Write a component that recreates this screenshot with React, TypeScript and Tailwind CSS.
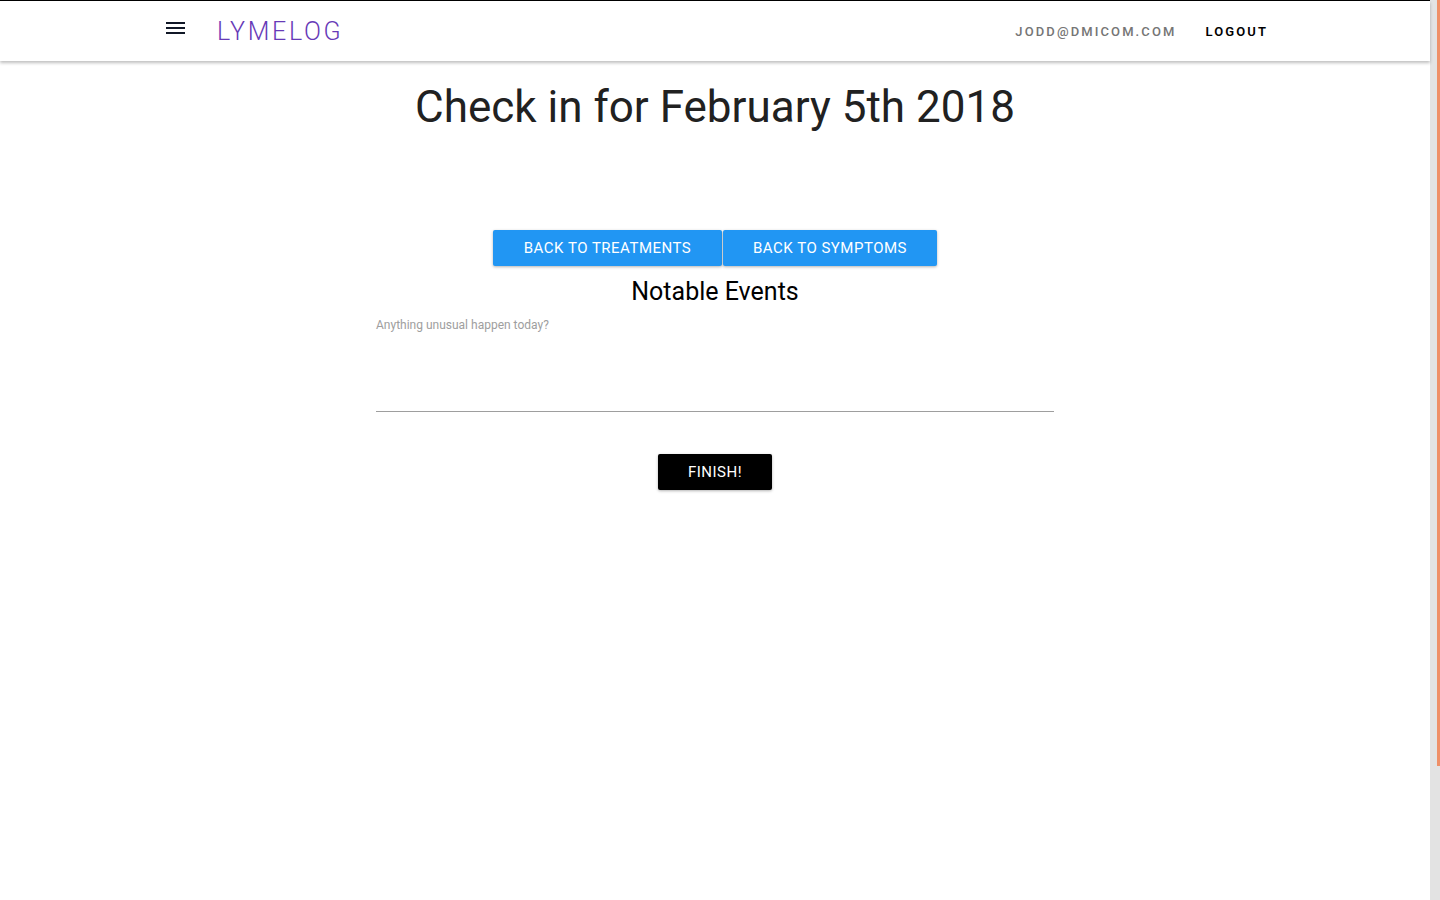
import React from "react";

export default function App() {
  return (
    <div className="h-[900px] w-[1440px] flex overflow-hidden bg-white" style={{ fontFamily: "Roboto, 'Liberation Sans', sans-serif" }}>
      <div className="flex-1 flex flex-col border-t border-black">
        <header className="h-[60px] flex items-center shadow-[0_2px_3px_rgba(0,0,0,0.25)] bg-white relative z-10">
          <div className="flex items-center pl-[166px]">
            <svg width="19" height="13" viewBox="0 0 19 13" className="mt-[-6px]">
              <rect x="0" y="0" width="19" height="2" fill="#111827" />
              <rect x="0" y="5" width="19" height="2" fill="#111827" />
              <rect x="0" y="10" width="19" height="2" fill="#111827" />
            </svg>
            <span className="ml-[32px] text-[25px] tracking-[2.7px] text-[#673ab7] font-light leading-none mt-[1px]">LYMELOG</span>
          </div>
          <div className="ml-auto flex items-center pr-[162px] text-[13px] font-medium tracking-[2.1px] mt-[1px]">
            <span className="text-[#757575]">JODD@DMICOM.COM</span>
            <span className="ml-[29px] text-black font-semibold">LOGOUT</span>
          </div>
        </header>
        <main className="flex flex-col items-center">
          <h1 className="mt-[20px] text-[44px] leading-[52px] text-[#212121]">Check in for February 5th 2018</h1>
          <div className="mt-[97px] flex">
            <button className="h-[36px] w-[229px] bg-[#2196f3] text-white text-[15px] tracking-[0.5px] rounded-[2px] shadow-[0_1px_3px_rgba(0,0,0,0.3)]">BACK TO TREATMENTS</button>
            <button className="ml-[1px] h-[36px] w-[214px] bg-[#2196f3] text-white text-[15px] tracking-[0.5px] rounded-[2px] shadow-[0_1px_3px_rgba(0,0,0,0.3)]">BACK TO SYMPTOMS</button>
          </div>
          <h2 className="mt-[10px] text-[25px] leading-[32px] text-black">Notable Events</h2>
          <div className="w-[678px] mt-[10px]">
            <div className="text-[12px] text-[#9e9e9e] leading-[14px]">Anything unusual happen today?</div>
            <div className="h-[80px] border-b border-[#9e9e9e]" />
          </div>
          <button className="mt-[42px] h-[36px] w-[114px] bg-black text-white text-[15px] tracking-[0.5px] rounded-[2px] shadow-[0_1px_3px_rgba(0,0,0,0.3)]">FINISH!</button>
        </main>
      </div>
      <div className="w-[10px] h-full bg-[#e3e3e3] flex justify-end">
        <div className="w-[3px] h-[766px] bg-[#ef9068]" />
      </div>
    </div>
  );
}
